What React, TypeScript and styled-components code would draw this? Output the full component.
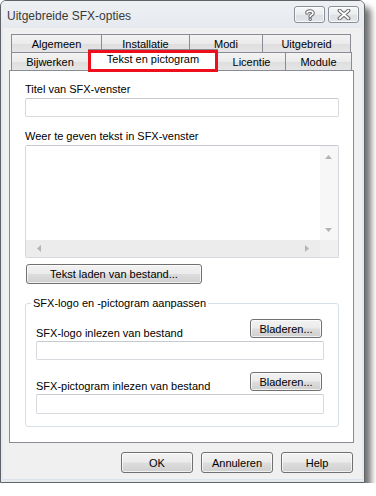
import styled, { createGlobalStyle, css } from "styled-components";

const uiFont = `"Liberation Sans", Arial, sans-serif`;

const GlobalStyle = createGlobalStyle`
    html, body {
        margin: 0;
        padding: 0;
        background: #ffffff;
    }
    body {
        font-family: ${uiFont};
        font-size: 11px;
        color: #000;
    }
`

const buttonFace = css`
    box-sizing: border-box;
    border: 1px solid #707070;
    border-radius: 3px;
    background: linear-gradient(#f2f2f2 0%, #ebebeb 48%, #dddddd 52%, #cfcfcf 100%);
    box-shadow: inset 0 0 0 1px rgba(255, 255, 255, 0.7);
    font-family: ${uiFont};
    font-size: 11px;
    color: #000;
    padding: 0;
    display: flex;
    align-items: center;
    justify-content: center;
`

const rowOneTabs = [
    { label: "Algemeen", width: 91 },
    { label: "Installatie", width: 89 },
    { label: "Modi", width: 74 },
    { label: "Uitgebreid", width: 89 },
];

const rowTwoTabs = [
    { label: "Bijwerken", width: 78 },
    { label: "Tekst en pictogram", width: 130, active: true },
    { label: "Licentie", width: 69 },
    { label: "Module", width: 67 },
];

const HelpGlyph = () => (
    <svg width="12" height="12" viewBox="0 0 12 12">
        <path d="M3 4 C3 1.5 9 1.5 9 4 C9 6 6.2 5.8 6.2 7.5" fill="none" stroke="#6a6a6a" strokeWidth="3.6" strokeLinecap="round" />
        <path d="M3 4 C3 1.5 9 1.5 9 4 C9 6 6.2 5.8 6.2 7.5" fill="none" stroke="#ffffff" strokeWidth="1.6" strokeLinecap="round" />
        <circle cx="6.2" cy="10.3" r="1.7" fill="#6a6a6a" />
        <circle cx="6.2" cy="10.3" r="0.8" fill="#ffffff" />
    </svg>
);

const CloseGlyph = () => (
    <svg width="14" height="11" viewBox="0 0 14 11">
        <path d="M2.5 1.5 L11.5 9.5 M11.5 1.5 L2.5 9.5" stroke="#6a6a6a" strokeWidth="3.8" strokeLinecap="round" />
        <path d="M2.5 1.5 L11.5 9.5 M11.5 1.5 L2.5 9.5" stroke="#ffffff" strokeWidth="1.8" strokeLinecap="round" />
    </svg>
);

const Arrow = ({ dir }: { dir: "up" | "down" | "left" | "right" }) => {
    const points = {
        up: "0,4 3.5,0 7,4",
        down: "0,0 3.5,4 7,0",
        left: "4,0 0,3.5 4,7",
        right: "0,0 4,3.5 0,7",
    }[dir];
    const vertical = dir === "up" || dir === "down";
    return (
        <svg width={vertical ? 7 : 4} height={vertical ? 4 : 7} viewBox={vertical ? "0 0 7 4" : "0 0 4 7"}>
            <polygon points={points} fill="#b4b4b4" />
        </svg>
    );
};

export default function App() {
    return (
        <>
            <GlobalStyle />
            <Window>
                <TitleBar>
                    <Title>Uitgebreide SFX-opties</Title>
                    <CaptionButtons>
                        <CaptionButton><HelpGlyph /></CaptionButton>
                        <CaptionButton><CloseGlyph /></CaptionButton>
                    </CaptionButtons>
                </TitleBar>
                <Client>
                    <TabStrip>
                        <TabRow>
                            {rowOneTabs.map((t) => (
                                <Tab key={t.label} $width={t.width}>{t.label}</Tab>
                            ))}
                        </TabRow>
                        <TabRow>
                            {rowTwoTabs.map((t) => (
                                <Tab key={t.label} $width={t.width} $active={t.active}>{t.label}</Tab>
                            ))}
                        </TabRow>
                    </TabStrip>
                    <Panel>
                        <FieldLabel>Titel van SFX-venster</FieldLabel>
                        <TextBox $width={314} />
                        <FieldLabel $top={12}>Weer te geven tekst in SFX-venster</FieldLabel>
                        <TextArea>
                            <TextBody />
                            <VScroll>
                                <ArrowCell><Arrow dir="up" /></ArrowCell>
                                <ArrowCell><Arrow dir="down" /></ArrowCell>
                            </VScroll>
                            <HScroll>
                                <ArrowCell><Arrow dir="left" /></ArrowCell>
                                <ArrowCell><Arrow dir="right" /></ArrowCell>
                            </HScroll>
                            <ScrollCorner />
                        </TextArea>
                        <LoadButton>Tekst laden van bestand...</LoadButton>
                        <GroupBox>
                            <Legend>SFX-logo en -pictogram aanpassen</Legend>
                            <BrowseRow>
                                <RowLabel>SFX-logo inlezen van bestand</RowLabel>
                                <BrowseButton>Bladeren...</BrowseButton>
                            </BrowseRow>
                            <TextBox $width={288} />
                            <BrowseRow $top={12}>
                                <RowLabel>SFX-pictogram inlezen van bestand</RowLabel>
                                <BrowseButton>Bladeren...</BrowseButton>
                            </BrowseRow>
                            <TextBox $width={288} $height={20} />
                        </GroupBox>
                    </Panel>
                    <DialogButtons>
                        <DialogButton>OK</DialogButton>
                        <DialogButton>Annuleren</DialogButton>
                        <DialogButton>Help</DialogButton>
                    </DialogButtons>
                </Client>
            </Window>
        </>
    );
}

const Window = styled.div`
    box-sizing: border-box;
    width: 365px;
    height: 483px;
    border: 1px solid #5f6368;
    border-radius: 6px 6px 0 0;
    background: #e6eaef;
    box-shadow: 6px 7px 6px rgba(0, 0, 0, 0.55);
    display: flex;
    flex-direction: column;
`

const TitleBar = styled.div`
    height: 27px;
    flex-shrink: 0;
    display: flex;
    align-items: flex-start;
    justify-content: space-between;
    padding: 0 5px 0 6px;
    background: linear-gradient(#eef0f3, #e6eaef);
    border-radius: 5px 5px 0 0;
`

const Title = styled.div`
    font-family: ${uiFont};
    font-size: 12px;
    color: #3a3a3a;
    padding-top: 8px;
`

const CaptionButtons = styled.div`
    display: flex;
    gap: 3px;
    padding-top: 5px;
`

const CaptionButton = styled.div`
    box-sizing: border-box;
    width: 31px;
    height: 17px;
    border: 1px solid #8b8f96;
    border-radius: 3px;
    background: linear-gradient(#f7f8f9 0%, #e9ebee 50%, #dcdfe3 51%, #e4e6ea 100%);
    box-shadow: inset 0 0 0 1px rgba(255, 255, 255, 0.7);
    display: flex;
    align-items: center;
    justify-content: center;
`

const Client = styled.div`
    flex: 1;
    margin: 0 2px 2px;
    background: #f0f0f0;
    padding: 7px 8px 0 6px;
    border-bottom: 1px solid #dbe3ee;
`

const TabStrip = styled.div`
    margin-left: 2px;
    position: relative;
    z-index: 2;
`

const TabRow = styled.div`
    display: flex;
    height: 18px;
    align-items: flex-end;
    &:first-child {
        height: 17px;
    }
`

const Tab = styled.div<{ $width: number; $active?: boolean }>`
    position: relative;
    box-sizing: border-box;
    width: ${(p) => p.$width}px;
    height: 18px;
    border: 1px solid #898c95;
    border-bottom: none;
    background: linear-gradient(#f3f3f3 0%, #ebebeb 50%, #dedede 51%, #e5e5e5 100%);
    display: flex;
    align-items: center;
    justify-content: center;
    color: #000;
    font-size: 11px;
    padding-top: 1px;

    & + & {
        margin-left: -1px;
    }

    ${(p) =>
        p.$active &&
        css`
            height: 22px;
            margin-bottom: -1px;
            background: #ffffff;
            z-index: 2;
            padding-top: 0;
            padding-bottom: 4px;

            &::after {
                content: "";
                position: absolute;
                top: 0;
                left: -1px;
                right: -1px;
                bottom: -1px;
                border: 3px solid #ee0f1c;
            }
        `}
`

const Panel = styled.div`
    box-sizing: border-box;
    width: 345px;
    height: 373px;
    background: #ffffff;
    border: 1px solid #898c95;
    padding: 0 14px 0 15px;
    display: flex;
    flex-direction: column;
    align-items: flex-start;
`

const FieldLabel = styled.div<{ $top?: number }>`
    line-height: 15px;
    margin-top: ${(p) => p.$top ?? 11}px;
    margin-bottom: 1px;
`

const TextBox = styled.div<{ $width: number; $height?: number }>`
    box-sizing: border-box;
    width: ${(p) => p.$width}px;
    height: ${(p) => p.$height ?? 19}px;
    border: 1px solid #d6d9de;
    border-top-color: #c6cad0;
    border-radius: 2px;
    background: #ffffff;
`

const TextArea = styled.div`
    box-sizing: border-box;
    width: 314px;
    height: 113px;
    border: 1px solid #d6d9de;
    border-top-color: #c6cad0;
    border-radius: 2px;
    display: grid;
    grid-template-columns: 1fr 18px;
    grid-template-rows: 1fr 17px;
`

const TextBody = styled.div`
    background: #ffffff;
`

const VScroll = styled.div`
    background: #f7f7f7;
    display: flex;
    flex-direction: column;
    justify-content: space-between;
    padding: 5px 0 4px;
`

const HScroll = styled.div`
    background: #ececec;
    display: flex;
    justify-content: space-between;
    align-items: center;
    padding: 0 5px 0 4px;
`

const ArrowCell = styled.div`
    width: 17px;
    height: 12px;
    display: flex;
    align-items: center;
    justify-content: center;
`

const ScrollCorner = styled.div`
    background: #f0f0f0;
`

const LoadButton = styled.button`
    ${buttonFace}
    width: 176px;
    height: 20px;
    margin: 6px 0 0 1px;
`

const GroupBox = styled.div`
    position: relative;
    box-sizing: border-box;
    width: 314px;
    height: 124px;
    margin-top: 19px;
    border: 1px solid #d5dfe5;
    border-radius: 3px;
    padding: 15px 14px 0 10px;
`

const Legend = styled.span`
    position: absolute;
    top: -8px;
    left: 5px;
    padding: 0 2px;
    background: #ffffff;
    line-height: 15px;
`

const BrowseRow = styled.div<{ $top?: number }>`
    display: flex;
    justify-content: space-between;
    align-items: flex-start;
    margin-top: ${(p) => p.$top ?? 0}px;
    padding-right: 2px;
`

const RowLabel = styled.div`
    line-height: 15px;
    margin-top: 7px;
`

const BrowseButton = styled.button`
    ${buttonFace}
    width: 72px;
    height: 19px;
`

const DialogButtons = styled.div`
    display: flex;
    justify-content: flex-end;
    gap: 8px;
    padding: 9px 1px 0 0;
`

const DialogButton = styled.button`
    ${buttonFace}
    width: 72px;
    height: 21px;
`
